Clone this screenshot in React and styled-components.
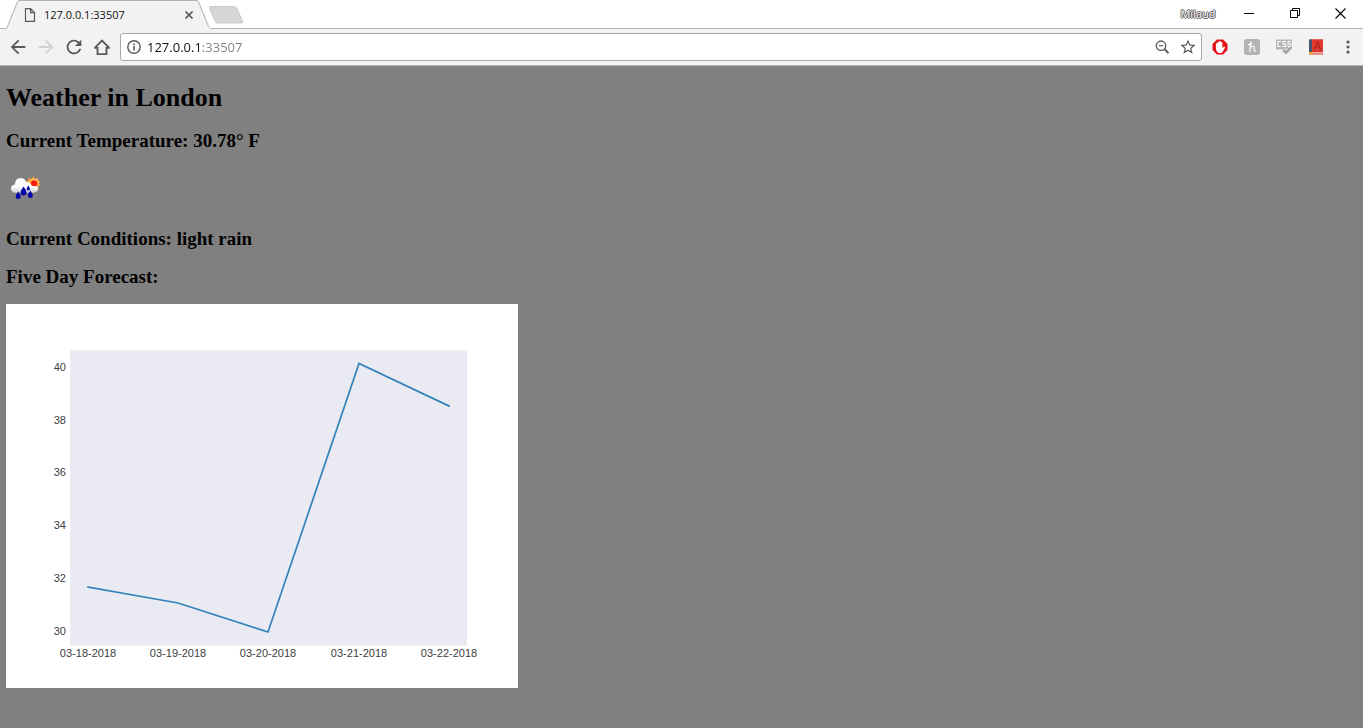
import React from "react";
import styled, { createGlobalStyle } from "styled-components";
import { MdArrowBack, MdArrowForward, MdRefresh, MdStarBorder } from "react-icons/md";

const GlobalStyle = createGlobalStyle`
  *, *::before, *::after { box-sizing: border-box; }
  body { margin: 0; background: #808080; }
`;

const Browser = styled.div`
  display: flex;
  flex-direction: column;
  min-height: 100vh;
  background: #808080;
  font-family: "Open Sans", "Noto Sans", sans-serif;
`;

const TitleBar = styled.header`
  display: flex;
  height: 29px;
  padding-left: 5px;
  background: #ffffff;
  border-bottom: 1px solid #b4b4b4;
`;

const Tab = styled.div`
  position: relative;
  display: flex;
  align-items: center;
  width: 207px;
  height: 29px;
  padding: 0 15px 0 18px;
`;

const TabShape = styled.svg`
  position: absolute;
  left: 0;
  top: 0;
`;

const TabTitle = styled.span`
  position: relative;
  flex: 1;
  margin-left: 7px;
  font-size: 11px;
  line-height: 16px;
  color: #111111;
`;

const FileIcon = styled.svg`
  position: relative;
`;

const IconButton = styled.button`
  position: relative;
  display: flex;
  flex: none;
  align-items: center;
  justify-content: center;
  width: ${(p) => p.$width}px;
  height: ${(p) => p.$height || 28}px;
  padding: 0;
  border: 0;
  background: none;
  color: ${(p) => p.$color || "#5a5a5a"};

  svg { flex: none; }
`;

const WindowControls = styled.div`
  display: flex;
  margin-left: auto;
`;

const ProfileButton = styled.button`
  width: 56px;
  height: 28px;
  padding: 0;
  border: 0;
  background: none;
  font: 11px/16px "Open Sans", "Noto Sans", sans-serif;
  color: #ffffff;
  text-shadow: 1px 0 #555555, -1px 0 #555555, 0 1px #555555, 0 -1px #555555;
`;

const Toolbar = styled.div`
  display: flex;
  align-items: center;
  height: 37px;
  padding-left: 4px;
  background: #f2f2f2;
  border-bottom: 1px solid #b4b4b4;
`;

const AddressBar = styled.form`
  display: flex;
  flex: 1;
  align-items: center;
  min-width: 0;
  height: 28px;
  margin: 0 2px 0 4px;
  border: 1px solid #a9a9a9;
  border-radius: 3px;
  background: #ffffff;
`;

const AddressInput = styled.input`
  flex: 1;
  min-width: 0;
  height: 26px;
  padding: 0;
  border: 0;
  outline: 0;
  font: 13px/18px "Open Sans", "Noto Sans", sans-serif;
  background: linear-gradient(to right, #111111 54px, #808080 54px);
  background-clip: text;
  -webkit-background-clip: text;
  -webkit-text-fill-color: transparent;
`;

const Page = styled.main`
  padding: 18px 6px;
  font-family: "Liberation Serif", "Times New Roman", serif;
  color: #000000;
`;

const Title = styled.h1`
  margin: 0 0 18px;
  font-size: 26px;
  line-height: 28px;
`;

const Fact = styled.h3`
  margin: 0 0 16px;
  font-size: 19px;
  line-height: 22px;
`;

const WeatherIcon = styled.svg`
  display: block;
  margin-bottom: 20px;
`;

const Chart = styled.svg`
  display: block;
  max-width: 100%;
  background: #ffffff;
  font-family: "Liberation Sans", Arial, sans-serif;
  font-size: 11px;
  fill: #404040;
`;

const days = [
  { label: "03-18-2018", x: 82, y: 283 },
  { label: "03-19-2018", x: 172, y: 299 },
  { label: "03-20-2018", x: 262, y: 328 },
  { label: "03-21-2018", x: 353, y: 59.5 },
  { label: "03-22-2018", x: 443, y: 102 },
];

const ticks = [
  { value: 40, y: 67 },
  { value: 38, y: 120 },
  { value: 36, y: 172 },
  { value: 34, y: 225 },
  { value: 32, y: 278 },
  { value: 30, y: 331 },
];

function ForecastChart() {
  return (
    <Chart width="512" height="384" viewBox="0 0 512 384" role="img" aria-label="Five day forecast">
      <rect x="64" y="46.3" width="397" height="295.4" fill="#eaeaf2" />
      <polyline
        points={days.map((d) => `${d.x},${d.y}`).join(" ")}
        fill="none"
        stroke="#1f77b4"
        strokeOpacity="0.9"
        strokeWidth="1.7"
        strokeLinecap="square"
      />
      {ticks.map((t) => (
        <text key={t.value} x="60" y={t.y} textAnchor="end">{t.value}</text>
      ))}
      {days.map((d) => (
        <text key={d.label} x={d.x} y="353" textAnchor="middle">{d.label}</text>
      ))}
    </Chart>
  );
}

function RainIcon() {
  return (
    <WeatherIcon width="40" height="40" viewBox="0 0 40 40" role="img" aria-label="light rain">
      <defs>
        <linearGradient id="cloud" x1="0" y1="0" x2="0" y2="1">
          <stop offset="0.6" stopColor="#ffffff" />
          <stop offset="1" stopColor="#cfcfcf" />
        </linearGradient>
      </defs>
      <path
        d="M27.500 8.500l1.600 2.600 3-1.300-.6 3 3.300.2-2.200 2.500 2.200 1.800-2.800 1 .7 3-3-1-6 1-1.500-6-2.600-2.200 3-.4-.3-3 3 1.400z"
        fill="#ffa02a"
      />
      <circle cx="28" cy="15.500" r="4.800" fill="#ffc870" />
      <circle cx="28" cy="15.800" r="3.500" fill="#f8200c" />
      <path
        d="M9.500 24.700c-2.800 0-4.500-1.500-4.500-3.900 0-2.500 1.600-4 3.900-4.300C9 12.800 11.200 10 14.600 10c2.700 0 4.700 1.600 5.500 4.100 2-.6 3.900.2 4.600 2 .8 1.600 2 2.300 3.800 2.100 1.200-.4 3.500 0 3.500 2.400 0 2.600-1.700 4.100-4.500 4.100z"
        fill="url(#cloud)"
      />
      <g fill="#0606a8">
        <path d="M12.200 23.500c1.300 2.200 2.500 3.400 2.500 4.900a2.500 2.500 0 0 1-5 0c0-1.500 1.200-2.700 2.500-4.900z" />
        <path d="M17.600 18.500c1.600 2.700 3 4.200 3 6.100a3 3 0 0 1-6 0c0-1.900 1.400-3.400 3-6.100z" />
        <path d="M22.300 17.500c.9 1.600 1.700 2.400 1.700 3.400a1.700 1.700 0 0 1-3.400 0c0-1 .8-1.800 1.700-3.400z" />
        <path d="M24.300 22.500c1.300 2.200 2.500 3.400 2.500 4.900a2.500 2.500 0 0 1-5 0c0-1.500 1.200-2.700 2.500-4.900z" />
      </g>
    </WeatherIcon>
  );
}

function TabStrip() {
  return (
    <TitleBar>
      <Tab>
        <TabShape width="207" height="29" viewBox="0 0 207 29" aria-hidden="true">
          <path d="M0 28.500C1.500 28.500 2 27.500 2.500 26.500L12 3C12.700 1.300 13.500.5 15 .5H191C192.500 .5 193.300 1.300 194 3L203.500 26.500C204 27.500 204.500 28.500 207 28.500V29H0z" fill="#f2f2f2" />
          <path d="M0 28.500C1.500 28.500 2 27.500 2.500 26.500L12 3C12.700 1.300 13.500.5 15 .5H191C192.500 .5 193.300 1.300 194 3L203.500 26.500C204 27.500 204.500 28.500 207 28.500" fill="none" stroke="#b0b0b0" />
        </TabShape>
        <FileIcon width="14" height="14" viewBox="0 0 14 14" aria-hidden="true" fill="none" stroke="#5a5a5a" strokeWidth="1.200">
          <path d="M2.500 .6H7.500L11.500 4.600V13.400H2.500zM7.500 .6V4.600H11.500" />
        </FileIcon>
        <TabTitle>127.0.0.1:33507</TabTitle>
        <IconButton type="button" $width={16} aria-label="Close tab">
          <svg width="8" height="8" viewBox="0 0 8 8" stroke="currentColor" strokeWidth="1.600">
            <path d="M.5.5l7 7M7.500.5l-7 7" />
          </svg>
        </IconButton>
      </Tab>
      <IconButton type="button" $width={28} aria-label="New tab">
        <svg width="36" height="19" viewBox="0 0 36 19">
          <path d="M3 1.500H26.500Q28 1.500 28.700 3L34.500 16Q35 18 33.500 18H9.500Q8 18 7.300 16.500L1.500 3.500Q1 1.500 3 1.500z" fill="#d6d6d6" stroke="#c2c2c2" strokeWidth=".8" />
        </svg>
      </IconButton>
      <WindowControls>
        <ProfileButton type="button">Milaud</ProfileButton>
        <IconButton type="button" $width={46} $height={26} $color="#000000" aria-label="Minimize">
          <svg width="10" height="10" viewBox="0 0 10 10"><path d="M0 5h10v1H0z" /></svg>
        </IconButton>
        <IconButton type="button" $width={46} $height={26} $color="#000000" aria-label="Restore">
          <svg width="10" height="10" viewBox="0 0 10 10" fill="none" stroke="currentColor">
            <path d="M.5 2.500h7v7h-7zM2.500 2.500v-2h7v7h-2" />
          </svg>
        </IconButton>
        <IconButton type="button" $width={45} $height={26} $color="#000000" aria-label="Close">
          <svg width="11" height="11" viewBox="0 0 11 11" stroke="currentColor" strokeWidth="1.100">
            <path d="M.5.5l10 10M10.500.5l-10 10" />
          </svg>
        </IconButton>
      </WindowControls>
    </TitleBar>
  );
}

function NavigationBar() {
  return (
    <Toolbar>
      <IconButton type="button" $width={28} aria-label="Back"><MdArrowBack size={22} /></IconButton>
      <IconButton type="button" $width={28} $color="#d2d2d2" aria-label="Forward"><MdArrowForward size={22} /></IconButton>
      <IconButton type="button" $width={28} aria-label="Reload"><MdRefresh size={22} /></IconButton>
      <IconButton type="button" $width={28} aria-label="Home">
        <svg width="18" height="18" viewBox="0 0 18 18" fill="none" stroke="currentColor" strokeWidth="1.900">
          <path d="M1.800 9.800L9 2.500l7.200 7.300M1.300 9.800h3M13.700 9.800h3M4.500 9v7.100h9V9" />
        </svg>
      </IconButton>
      <AddressBar onSubmit={(e) => e.preventDefault()}>
        <IconButton type="button" $width={26} aria-label="Site information">
          <svg width="14" height="14" viewBox="0 0 14 14" fill="none" stroke="currentColor">
            <circle cx="7" cy="7" r="6.200" strokeWidth="1.400" />
            <path d="M7 6v4.500M7 3.500v1.600" strokeWidth="1.600" />
          </svg>
        </IconButton>
        <AddressInput aria-label="Address" defaultValue="127.0.0.1:33507" spellCheck={false} />
        <IconButton type="button" $width={26} aria-label="Zoom">
          <svg width="14" height="14" viewBox="0 0 14 14" fill="none" stroke="currentColor">
            <circle cx="6" cy="5.700" r="4.700" strokeWidth="1.400" />
            <path d="M9.300 9l4.200 4.200" strokeWidth="1.900" />
            <path d="M3.700 5.700h4.600" strokeWidth="1.100" />
          </svg>
        </IconButton>
        <IconButton type="button" $width={26} aria-label="Bookmark"><MdStarBorder size={18} /></IconButton>
      </AddressBar>
      <IconButton type="button" $width={32} aria-label="Ad blocker">
        <svg width="16" height="16" viewBox="0 0 16 16">
          <path d="M4.900.5h6.200l4.400 4.400v6.200l-4.400 4.400H4.900L.5 11.100V4.900z" fill="#e4101a" />
          <path d="M3.900 8.200V5q0-.8.700-.8t.8.800V3.500q0-.8.800-.8t.8.800V2.800q0-.8.900-.8t.9.800v1q0-.8.800-.8t.8.800v5.400l1-1.300q.5-.6 1.200-.2t.2 1.200l-2 3.700q-.7 1.500-2.300 1.500H7.600q-1.800 0-2.700-1.600-1-1.700-1-4.300z" fill="#ffffff" />
        </svg>
      </IconButton>
      <IconButton type="button" $width={32} aria-label="Coupons">
        <svg width="16" height="16" viewBox="0 0 16 16" fill="none">
          <rect width="16" height="16" rx="2.500" fill="#b4b4b4" />
          <path d="M6.900 3Q5.800 7 5.900 12.600M5.900 9.800Q7 7.200 8.900 7.200T10.200 9Q9.700 12.400 11.400 12.200M4.300 5.600Q6 4.800 7.800 5" stroke="#f7f7f7" strokeWidth="1.300" strokeLinecap="round" />
        </svg>
      </IconButton>
      <IconButton type="button" $width={32} aria-label="CSS tool">
        <svg width="17" height="16" viewBox="0 0 17 16" fill="none">
          <path d="M0 .5h16v10H0z" fill="#b6b6b6" />
          <path d="M4.900 2.500H1.900v5h3M10 2.500H7v2.500h2.700v2.500H6.600M15 2.500h-2.900v2.500h2.700v2.500h-3.100" stroke="#ffffff" strokeWidth="1.100" />
          <path d="M7 11l2.900 3 5.700-6.200" stroke="#eeeeee" strokeWidth="4" />
          <path d="M7.200 11l2.700 2.700 5.500-5.700" stroke="#a0a0a0" strokeWidth="2.400" />
        </svg>
      </IconButton>
      <IconButton type="button" $width={32} aria-label="Dictionary">
        <svg width="16" height="16" viewBox="0 0 16 16">
          <path d="M1 .5h14v15H1z" fill="#d3302b" />
          <path d="M4 .5H15v12H4z" fill="#e03a31" />
          <path d="M1 .5h3v12.500H1z" fill="#465672" />
          <path d="M4 13.300h11v1.200H4z" fill="#eee2df" />
          <path d="M1 13h3.500v2.500L2.800 14.500 1 15.500z" fill="#f1b51f" />
          <path d="M6.500 10.500l2.700-7.500h.8l2.700 7.500M7.500 8h4.200" fill="none" stroke="#b02420" strokeWidth="1.200" />
        </svg>
      </IconButton>
      <IconButton type="button" $width={31} aria-label="Menu">
        <svg width="4" height="16" viewBox="0 0 4 16" fill="currentColor">
          <circle cx="2" cy="3" r="1.600" /><circle cx="2" cy="8" r="1.600" /><circle cx="2" cy="13" r="1.600" />
        </svg>
      </IconButton>
    </Toolbar>
  );
}

export default function App() {
  return (
    <Browser>
      <GlobalStyle />
      <TabStrip />
      <NavigationBar />
      <Page>
        <Title>Weather in London</Title>
        <Fact>Current Temperature: 30.78° F</Fact>
        <RainIcon />
        <Fact>Current Conditions: light rain</Fact>
        <Fact>Five Day Forecast:</Fact>
        <ForecastChart />
      </Page>
    </Browser>
  );
}
